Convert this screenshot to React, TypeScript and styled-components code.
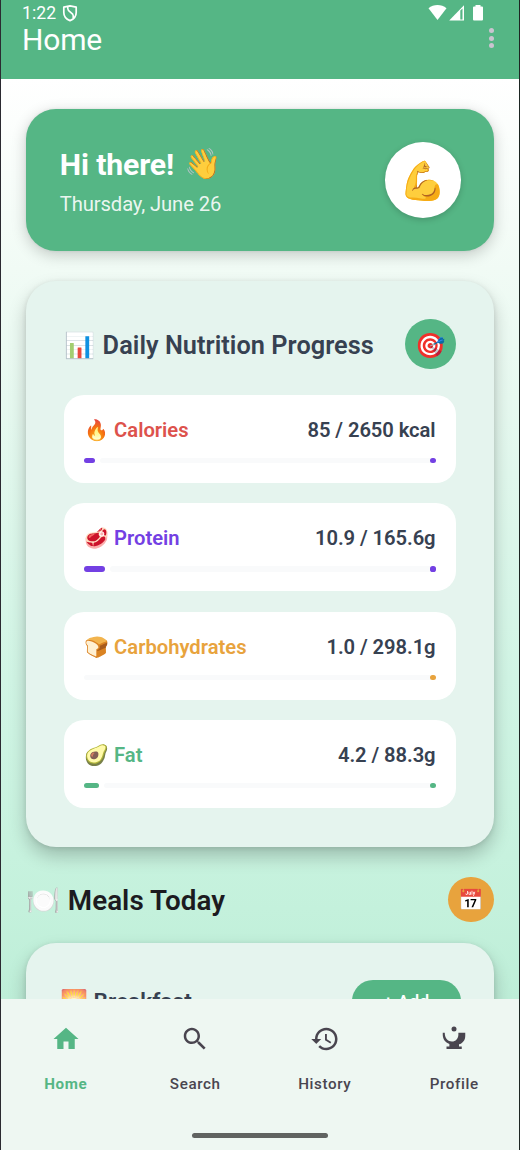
import React from "react";
import styled, { createGlobalStyle } from "styled-components";

const Global = createGlobalStyle`
  * { box-sizing: border-box; }
  html, body { margin: 0; padding: 0; }
  body { font-family: Roboto, "Noto Color Emoji", sans-serif; background: #fff; }
`;

const Screen = styled.div`
  width: 520px;
  height: 1150px;
  overflow: hidden;
  display: flex;
  flex-direction: column;
  border-left: 1px solid #2b2a31;
  border-right: 1px solid #1d2623;
`;

const Header = styled.header`
  height: 79px;
  flex: none;
  background: #55b685;
  color: #fff;
  padding: 4px 21px 0;
`;

const StatusBar = styled.div`
  display: flex;
  justify-content: space-between;
  height: 20px;
  padding-right: 14px;
`;

const StatusGroup = styled.div`
  display: flex;
  align-items: flex-start;
`;

const Clock = styled.span`
  font-size: 17.6px;
  line-height: 19px;
  letter-spacing: 0.1px;
  margin-right: 6px;
`;

const TitleBar = styled.div`
  display: flex;
  justify-content: space-between;
`;

const Title = styled.h1`
  margin: 0;
  font-weight: 400;
  font-size: 30px;
  line-height: 31px;
  letter-spacing: -0.15px;
`;

const Dots = styled.div`
  display: flex;
  flex-direction: column;
  gap: 2.6px;
  padding: 4px 4px 0 0;
`;

const Dot = styled.i`
  width: 5px;
  height: 5px;
  border-radius: 50%;
  background: #cac4d0;
`;

const Content = styled.main`
  flex: 1;
  min-height: 0;
  overflow: hidden;
  padding: 30px 25.3px 0;
  background: linear-gradient(#ffffff 0, #f1fbf5 190px, #d1f5e5 600px, #c4f1dc 830px, #beeed8 920px);
`;

const Hero = styled.section`
  height: 141.6px;
  border-radius: 30px;
  background: #55b685;
  box-shadow: 0 4px 15px rgba(0, 0, 0, 0.2), 0 0 3px rgba(0, 0, 0, 0.08);
  display: flex;
  align-items: center;
  justify-content: space-between;
  padding: 0 33px 0 33.5px;
`;

const Greeting = styled.h2`
  margin: 6px 0 0;
  display: flex;
  align-items: center;
  height: 38px;
  color: #fff;
  font-size: 30.2px;
  font-weight: 700;
  letter-spacing: -0.15px;
`;

const DateText = styled.div`
  margin-top: 3.6px;
  height: 34px;
  line-height: 34px;
  color: rgba(255, 255, 255, 0.9);
  font-size: 20.2px;
  letter-spacing: -0.1px;
`;

const Emoji = styled.span<{ $w: number; $size: number }>`
  display: inline-flex;
  flex: none;
  justify-content: center;
  width: ${(p) => p.$w}px;
  font-family: "Noto Color Emoji", sans-serif;
  font-size: ${(p) => p.$size}px;
  font-weight: 400;
  letter-spacing: 0;
  line-height: 1.2;
  filter: saturate(0.88) brightness(1.02);
`;

const Disc = styled.div<{ $size: number; $bg: string; $raised?: boolean; $drop?: number }>`
  flex: none;
  width: ${(p) => p.$size}px;
  height: ${(p) => p.$size}px;
  border-radius: 50%;
  background: ${(p) => p.$bg};
  display: flex;
  align-items: center;
  justify-content: center;
  padding-top: ${(p) => p.$drop || 0}px;
  box-shadow: ${(p) => (p.$raised ? "0 2px 6px rgba(0,0,0,.18)" : "none")};
`;

const Panel = styled.section`
  margin-top: 30.4px;
  height: 566px;
  border-radius: 30px;
  background: #e5f4ee;
  box-shadow: 0 9px 18px rgba(0, 0, 0, 0.22), 0 1px 5px rgba(0, 0, 0, 0.1);
  padding: 38px 38px 0;
`;

const SectionHead = styled.div<{ $h: number }>`
  height: ${(p) => p.$h}px;
  display: flex;
  align-items: center;
  justify-content: space-between;
`;

const SectionTitle = styled.h3<{ $size: number; $color: string; $ls?: number; $drop?: number }>`
  margin: 0;
  padding-top: ${(p) => p.$drop || 0}px;
  display: flex;
  align-items: center;
  font-size: ${(p) => p.$size}px;
  font-weight: 600;
  color: ${(p) => p.$color};
  letter-spacing: ${(p) => p.$ls || 0}px;
  white-space: nowrap;
`;

const Nutrients = styled.div`
  display: flex;
  flex-direction: column;
  gap: 20.2px;
  margin-top: 25.3px;
`;

const NutrientCard = styled.div`
  height: 88.25px;
  border-radius: 20px;
  background: #fff;
  padding: 20px 20.2px 0;
`;

const NutrientRow = styled.div`
  height: 30px;
  display: flex;
  justify-content: space-between;
  align-items: center;
  font-size: 20.2px;
  font-weight: 600;
  color: #374151;
`;

const NutrientName = styled.span<{ $color: string }>`
  display: flex;
  align-items: center;
  color: ${(p) => p.$color};
`;

const Amount = styled.span`
  letter-spacing: -0.07px;
`;

const Bar = styled.div`
  display: flex;
  gap: 5px;
  height: 5.2px;
  margin-top: 13.2px;
`;

const Fill = styled.div<{ $color: string }>`
  flex: none;
  border-radius: 3px;
  background: ${(p) => p.$color};
`;

const Track = styled.div<{ $color: string }>`
  flex: 1;
  border-radius: 3px;
  background: #f9fafb;
  display: flex;
  justify-content: flex-end;
  &::after {
    content: "";
    width: 5.4px;
    height: 5.2px;
    border-radius: 50%;
    background: ${(p) => p.$color};
  }
`;

const MealsHead = styled(SectionHead)`
  margin-top: 30px;
`;

const MealPanel = styled(Panel)`
  margin-top: 20.5px;
  height: 200px;
  padding: 37.6px 33.2px 0 34.6px;
`;

const AddButton = styled.button`
  border: 0;
  width: 108.5px;
  height: 42px;
  border-radius: 21px;
  background: #55b685;
  color: #fff;
  font: 500 17.7px Roboto, sans-serif;
  padding: 1px 0 0;
`;

const Nav = styled.nav`
  flex: none;
  height: 151px;
  background: #eef7f2;
  display: flex;
  flex-direction: column;
  align-items: center;
`;

const Tabs = styled.div`
  width: 100%;
  display: flex;
  height: 133.7px;
`;

const Tab = styled.div<{ $active?: boolean }>`
  flex: 1;
  display: flex;
  flex-direction: column;
  align-items: center;
  padding-top: 25px;
  color: ${(p) => (p.$active ? "#55b685" : "#49454f")};
  font-size: 15.2px;
  font-weight: ${(p) => (p.$active ? 700 : 500)};
  letter-spacing: 0.62px;
  line-height: 20px;
  svg { display: block; margin-bottom: 20px; }
`;

const HomeBar = styled.div`
  width: 136px;
  height: 5px;
  border-radius: 3px;
  background: #606361;
`;

const icons: Record<string, React.ReactNode> = {
  Home: <path d="M10 20v-6h4v6h5v-8h3L12 3 2 12h3v8z" />,
  Search: (
    <path d="M15.5 14h-.79l-.28-.27C15.41 12.59 16 11.11 16 9.5 16 5.91 13.09 3 9.5 3S3 5.91 3 9.5 5.91 16 9.5 16c1.61 0 3.09-.59 4.23-1.57l.27.28v.79l5 4.99L20.49 19l-4.99-5zm-6 0C7.01 14 5 11.99 5 9.5S7.01 5 9.5 5 14 7.01 14 9.5 11.99 14 9.5 14z" />
  ),
  History: (
    <path d="M13 3c-4.97 0-9 4.03-9 9H1l3.89 3.89.07.14L9 12H6c0-3.87 3.13-7 7-7s7 3.13 7 7-3.13 7-7 7c-1.93 0-3.68-.79-4.94-2.06l-1.42 1.42C8.27 19.99 10.51 21 13 21c4.97 0 9-4.03 9-9s-4.03-9-9-9zm-1 5v5l4.28 2.54.72-1.21-3.5-2.08V8H12z" />
  ),
  Profile: (
    <>
      <circle cx="12" cy="4" r="2" />
      <path d="M3 7h1.6c0 4.300 2.600 7 5.700 7s5.200-2.600 5.200-5.700V7H21v2.500c0 3.300-2 5.900-5 6.700V18h2.200v2H6v-2h2.300v-2C5 14.800 3 12 3 8.600z" />
    </>
  ),
};

const nutrients = [
  { emoji: "🔥", name: "Calories", value: "85 / 2650 kcal", color: "#dd524c", bar: "#7340e3", fill: 10.6 },
  { emoji: "🥩", name: "Protein", value: "10.9 / 165.6g", color: "#7340e3", bar: "#7340e3", fill: 21 },
  { emoji: "🍞", name: "Carbohydrates", value: "1.0 / 298.1g", color: "#e8a33d", bar: "#e8a33d", fill: 0 },
  { emoji: "🥑", name: "Fat", value: "4.2 / 88.3g", color: "#55b685", bar: "#55b685", fill: 14.4 },
];

export default function App() {
  return (
    <Screen>
      <Global />
      <Header>
        <StatusBar>
          <StatusGroup>
            <Clock>1:22</Clock>
            <svg width="16" height="18" viewBox="0 0 16 18" fill="none" stroke="#fff" strokeWidth="1.7">
              <path d="M8 1.800 14.200 3.200V8.500C14.200 12.200 11.700 15.200 8 16.600 4.300 15.200 1.800 12.200 1.800 8.500V3.200Z" strokeLinejoin="round" />
              <path d="M5.800 2.500V4.800C5.800 8.200 11.200 8.200 11.200 11.600V14" strokeWidth="1.600" />
            </svg>
          </StatusGroup>
          <StatusGroup>
            <svg width="56" height="18" viewBox="0 0 56 18" fill="#fff">
              <path d="M.5 4.300C5.500-.1 13.500-.1 18.500 4.300L9.500 16z" />
              <path d="M21.200 16.600 36 1.300V16.600z" />
              <path d="M32.300 6.500V15.500H34.500V4.500z" fill="#55b685" />
              <path d="M47.500 1h5v1.500H54q1 0 1 1V15.500q0 1-1 1H46q-1 0-1-1V3.500q0-1 1-1h1.500z" />
            </svg>
          </StatusGroup>
        </StatusBar>
        <TitleBar>
          <Title>Home</Title>
          <Dots>
            <Dot />
            <Dot />
            <Dot />
          </Dots>
        </TitleBar>
      </Header>
      <Content>
        <Hero>
          <div>
            <Greeting>
              Hi there!&nbsp;<Emoji $w={44} $size={30}>👋</Emoji>
            </Greeting>
            <DateText>Thursday, June 26</DateText>
          </div>
          <Disc $size={75.7} $bg="#fff" $raised $drop={4}>
            <Emoji $w={49} $size={38}>💪</Emoji>
          </Disc>
        </Hero>
        <Panel>
          <SectionHead $h={50.5}>
            <SectionTitle $size={25.3} $color="#374151" $ls={0.04} $drop={3}>
              <Emoji $w={32} $size={25}>📊</Emoji>&nbsp;Daily Nutrition Progress
            </SectionTitle>
            <Disc $size={50.5} $bg="#55b685" $drop={2}>
              <Emoji $w={32} $size={24.5}>🎯</Emoji>
            </Disc>
          </SectionHead>
          <Nutrients>
            {nutrients.map((n) => (
              <NutrientCard key={n.name}>
                <NutrientRow>
                  <NutrientName $color={n.color}>
                    <Emoji $w={24.6} $size={20}>{n.emoji}</Emoji>&nbsp;{n.name}
                  </NutrientName>
                  <Amount>{n.value}</Amount>
                </NutrientRow>
                <Bar>
                  {n.fill > 0 && <Fill $color={n.bar} style={{ width: n.fill }} />}
                  <Track $color={n.bar} />
                </Bar>
              </NutrientCard>
            ))}
          </Nutrients>
        </Panel>
        <MealsHead $h={45.4}>
          <SectionTitle $size={27.8} $color="#1c1b1f" $ls={0.05} $drop={1.5}>
            <Emoji $w={34.5} $size={27.5}>🍽️</Emoji>&nbsp;Meals Today
          </SectionTitle>
          <Disc $size={45.4} $bg="#e8a33d" $drop={1}>
            <Emoji $w={28} $size={20.5}>📅</Emoji>
          </Disc>
        </MealsHead>
        <MealPanel>
          <SectionHead $h={42}>
            <SectionTitle $size={22.7} $color="#374151">
              <Emoji $w={27} $size={22.5}>🌅</Emoji>&nbsp;Breakfast
            </SectionTitle>
            <AddButton>+ Add</AddButton>
          </SectionHead>
        </MealPanel>
      </Content>
      <Nav>
        <Tabs>
          {Object.keys(icons).map((name) => (
            <Tab key={name} $active={name === "Home"}>
              <svg width="30" height="30" viewBox="0 0 24 24" fill="currentColor">{icons[name]}</svg>
              {name}
            </Tab>
          ))}
        </Tabs>
        <HomeBar />
      </Nav>
    </Screen>
  );
}
